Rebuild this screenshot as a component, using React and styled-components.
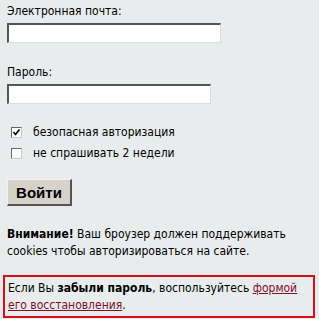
import React from "react";
import styled, { createGlobalStyle } from "styled-components";

const Global = createGlobalStyle`
  html, body { margin: 0; padding: 0; background: #e9ecec; }
  body { font-family: "DejaVu Sans Condensed", "DejaVu Sans", Verdana, sans-serif; font-size: 12px; color: #000; }
`;

const Page = styled.div`
  width: 319px;
  height: 319px;
  box-sizing: border-box;
  padding: 3px 4px 0 4px;
  display: flex;
  flex-direction: column;
`;

const Field = styled.div`
  display: flex;
  flex-direction: column;
  padding-left: 3px;
  margin-bottom: ${p => p.$mb}px;
`;

const Label = styled.label`
  font-size: 12px;
  line-height: 16px;
  margin-bottom: 4px;
`;

const Input = styled.input`
  width: ${p => p.$w}px;
  height: 20px;
  box-sizing: border-box;
  background: #fff;
  border-style: solid;
  border-width: 2px 1px 1px 2px;
  border-color: #555 #ddd #ddd #555;
  margin: 0;
  padding: 0;
`;

const Checks = styled.div`
  display: flex;
  flex-direction: column;
  gap: 6px;
  padding-left: 7px;
  margin-bottom: 18px;
`;

const CheckRow = styled.label`
  display: flex;
  align-items: center;
  gap: 11px;
  font-size: 12px;
  line-height: 15px;
`;

const Box = styled.span`
  width: 11px;
  height: 11px;
  box-sizing: border-box;
  background: #fff;
  border-style: solid;
  border-width: 1px;
  border-color: #666 #ccc #ccc #666;
  display: flex;
  align-items: center;
  justify-content: center;
`;

const Button = styled.button`
  margin-left: 3px;
  align-self: flex-start;
  flex: 0 0 27px;
  width: 65px;
  height: 27px;
  box-sizing: border-box;
  background: #d6d2ca;
  border-style: solid;
  border-width: 1px 2px 2px 1px;
  border-color: #f4f2ee #555 #555 #f4f2ee;
  font-family: "Liberation Sans", Arial, sans-serif;
  font-weight: bold;
  font-size: 15px;
  color: #000;
  padding: 0;
  margin-bottom: 20px;
`;

const Note = styled.p`
  margin: 0 0 0 3px;
  font-size: 12px;
  line-height: 17px;
  margin-bottom: 15px;
`;

const Alert = styled.div`
  border: 2px solid #d4101c;
  padding: 3px 3px 2px 3px;
  font-size: 12px;
  line-height: 17px;
  width: 312px;
  box-sizing: border-box;
  margin-left: -1px;
`;

const Link = styled.a`
  color: #80102a;
  text-decoration: underline;
`;

export default function App() {
  return (
    <>
      <Global />
      <Page>
        <Field $mb={21}>
          <Label>Электронная почта:</Label>
          <Input $w={214} />
        </Field>
        <Field $mb={21}>
          <Label>Пароль:</Label>
          <Input $w={204} />
        </Field>
        <Checks>
          <CheckRow>
            <Box>
              <svg width="9" height="9" viewBox="0 0 9 9">
                <path d="M1.5 4 L3.5 6.5 L7.5 1.5" stroke="#000" strokeWidth="1.6" fill="none" />
              </svg>
            </Box>
            безопасная авторизация
          </CheckRow>
          <CheckRow>
            <Box />
            не спрашивать 2 недели
          </CheckRow>
        </Checks>
        <Button>Войти</Button>
        <Note>
          <b>Внимание!</b> Ваш броузер должен поддерживать cookies чтобы авторизироваться на сайте.
        </Note>
        <Alert>
          Если Вы <b>забыли пароль</b>, воспользуйтесь <Link href="#">формой его восстановления</Link>.
        </Alert>
      </Page>
    </>
  );
}
